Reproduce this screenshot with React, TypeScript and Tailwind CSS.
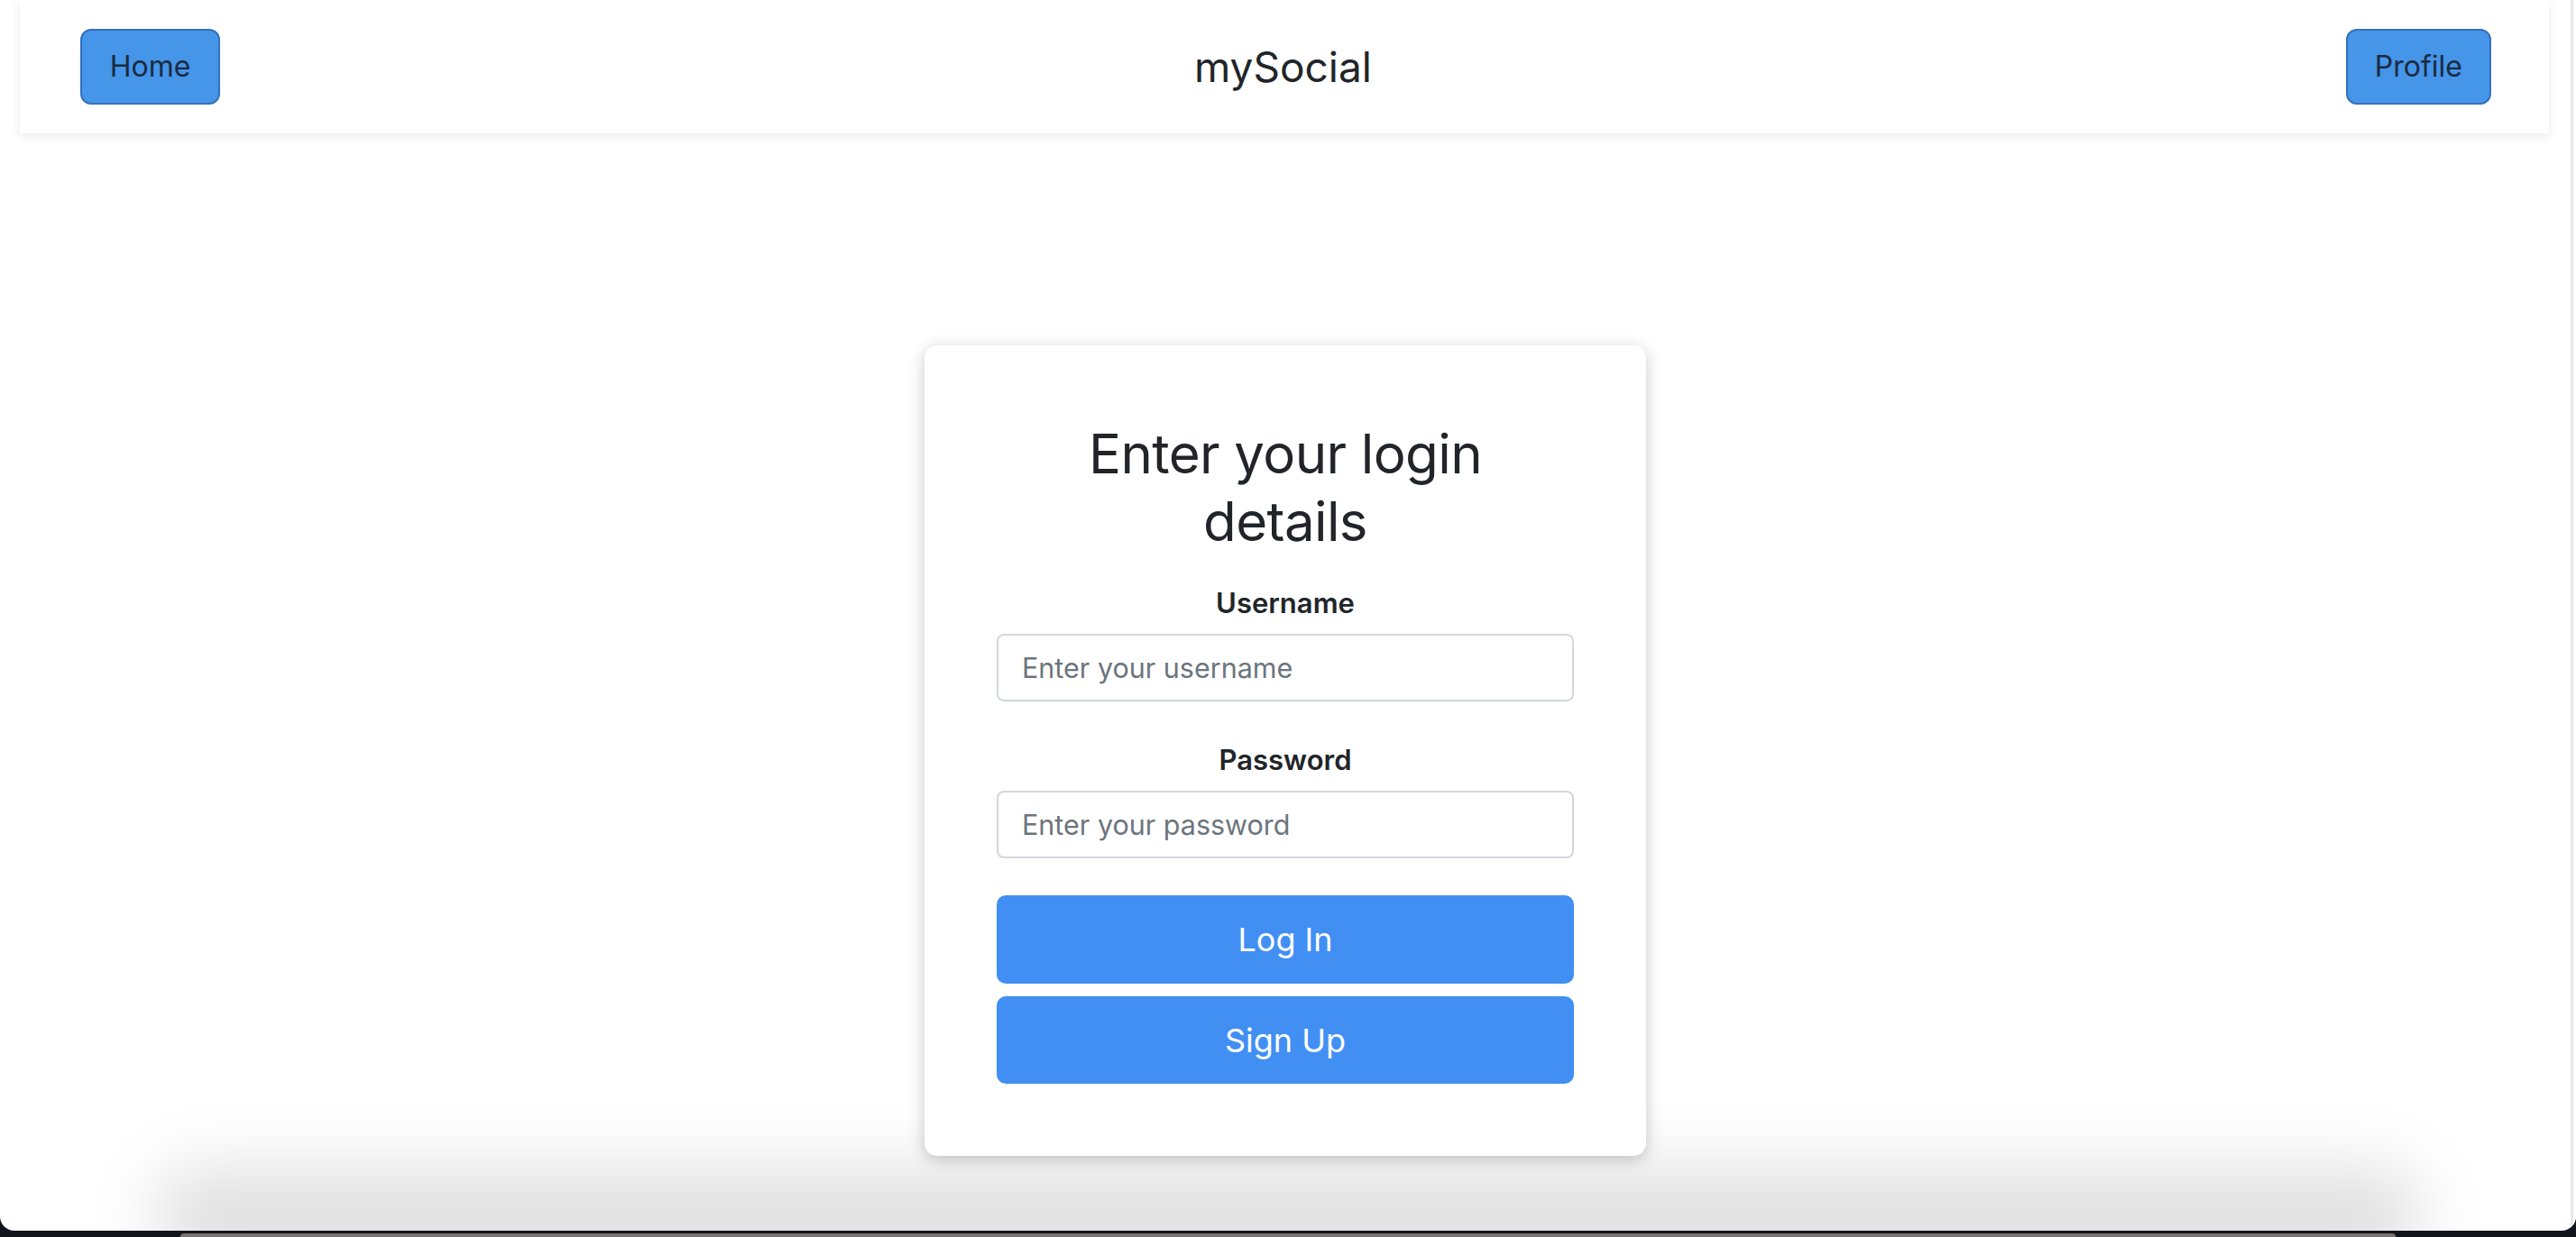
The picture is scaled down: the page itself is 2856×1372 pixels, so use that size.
type NavButtonProps = {
  label: string;
};

function NavButton({ label }: NavButtonProps) {
  return (
    <button
      type="button"
      className="flex h-[84px] min-w-[155px] items-center justify-center rounded-[12px] border-2 border-[#3471bd] bg-[#4595e8] px-[30px] text-[32px] leading-none text-[#1b2a42]"
    >
      {label}
    </button>
  );
}

type FieldProps = {
  label: string;
  type: string;
  placeholder: string;
};

function Field({ label, type, placeholder }: FieldProps) {
  return (
    <div className="flex flex-col items-center">
      <label className="text-[31px] font-semibold leading-[48px] text-[#212529]">{label}</label>
      <input
        type={type}
        placeholder={placeholder}
        className="mt-[10px] h-[75px] w-full rounded-[8px] border-2 border-[#d3d7dc] bg-white px-[26px] text-[30.5px] text-[#212529] outline-none placeholder:text-[#6c757d]"
      />
    </div>
  );
}

export default function App() {
  return (
    <div
      className="flex h-screen w-full flex-col bg-[#12151b] text-[#212529]"
      style={{ fontFamily: "Inter, 'Noto Sans', sans-serif" }}
    >
      <div className="relative flex h-[1365px] w-full overflow-hidden rounded-b-[16px] bg-white">
        <div className="pointer-events-none absolute bottom-[-40px] left-[170px] right-[170px] h-[110px] rounded-[60px] bg-black/12 blur-[36px]" />

        <main className="relative z-10 flex flex-1 flex-col">
          <header className="ml-[22px] mr-[24px] flex h-[148px] items-center justify-between bg-white pl-[67px] pr-[64px] shadow-[0_3px_10px_rgba(0,0,0,0.09)]">
            <NavButton label="Home" />
            <h1 className="text-[46px] font-normal leading-none text-[#212529]">mySocial</h1>
            <NavButton label="Profile" />
          </header>

          <div className="flex justify-center pt-[235px]">
            <section className="w-[800px] rounded-[14px] bg-white px-[80px] pb-[80px] pt-[83px] shadow-[0_4px_18px_rgba(0,0,0,0.22)]">
              <h2 className="text-center text-[60px] font-normal leading-[75px] tracking-[-0.01em] text-[#212529]">
                Enter your login
                <br />
                details
              </h2>
              <form className="mt-[29px] flex flex-col">
                <Field label="Username" type="text" placeholder="Enter your username" />
                <div className="mt-[41px]">
                  <Field label="Password" type="password" placeholder="Enter your password" />
                </div>
                <button
                  type="button"
                  className="mt-[41px] h-[98px] w-full rounded-[10px] bg-[#428ff4] text-[36px] text-white"
                >
                  Log In
                </button>
                <button
                  type="button"
                  className="mt-[14px] h-[97px] w-full rounded-[10px] bg-[#428ff4] text-[36px] text-white"
                >
                  Sign Up
                </button>
              </form>
            </section>
          </div>
        </main>
        <div className="relative z-10 w-[3px] bg-[#e8e8e8]" />
        <div className="relative z-10 w-[3px] bg-white" />
      </div>

      <div className="flex flex-1 items-end px-[200px]">
        <div className="h-[4px] w-full rounded-t-[10px] bg-[#7a7473]" />
      </div>
    </div>
  );
}
